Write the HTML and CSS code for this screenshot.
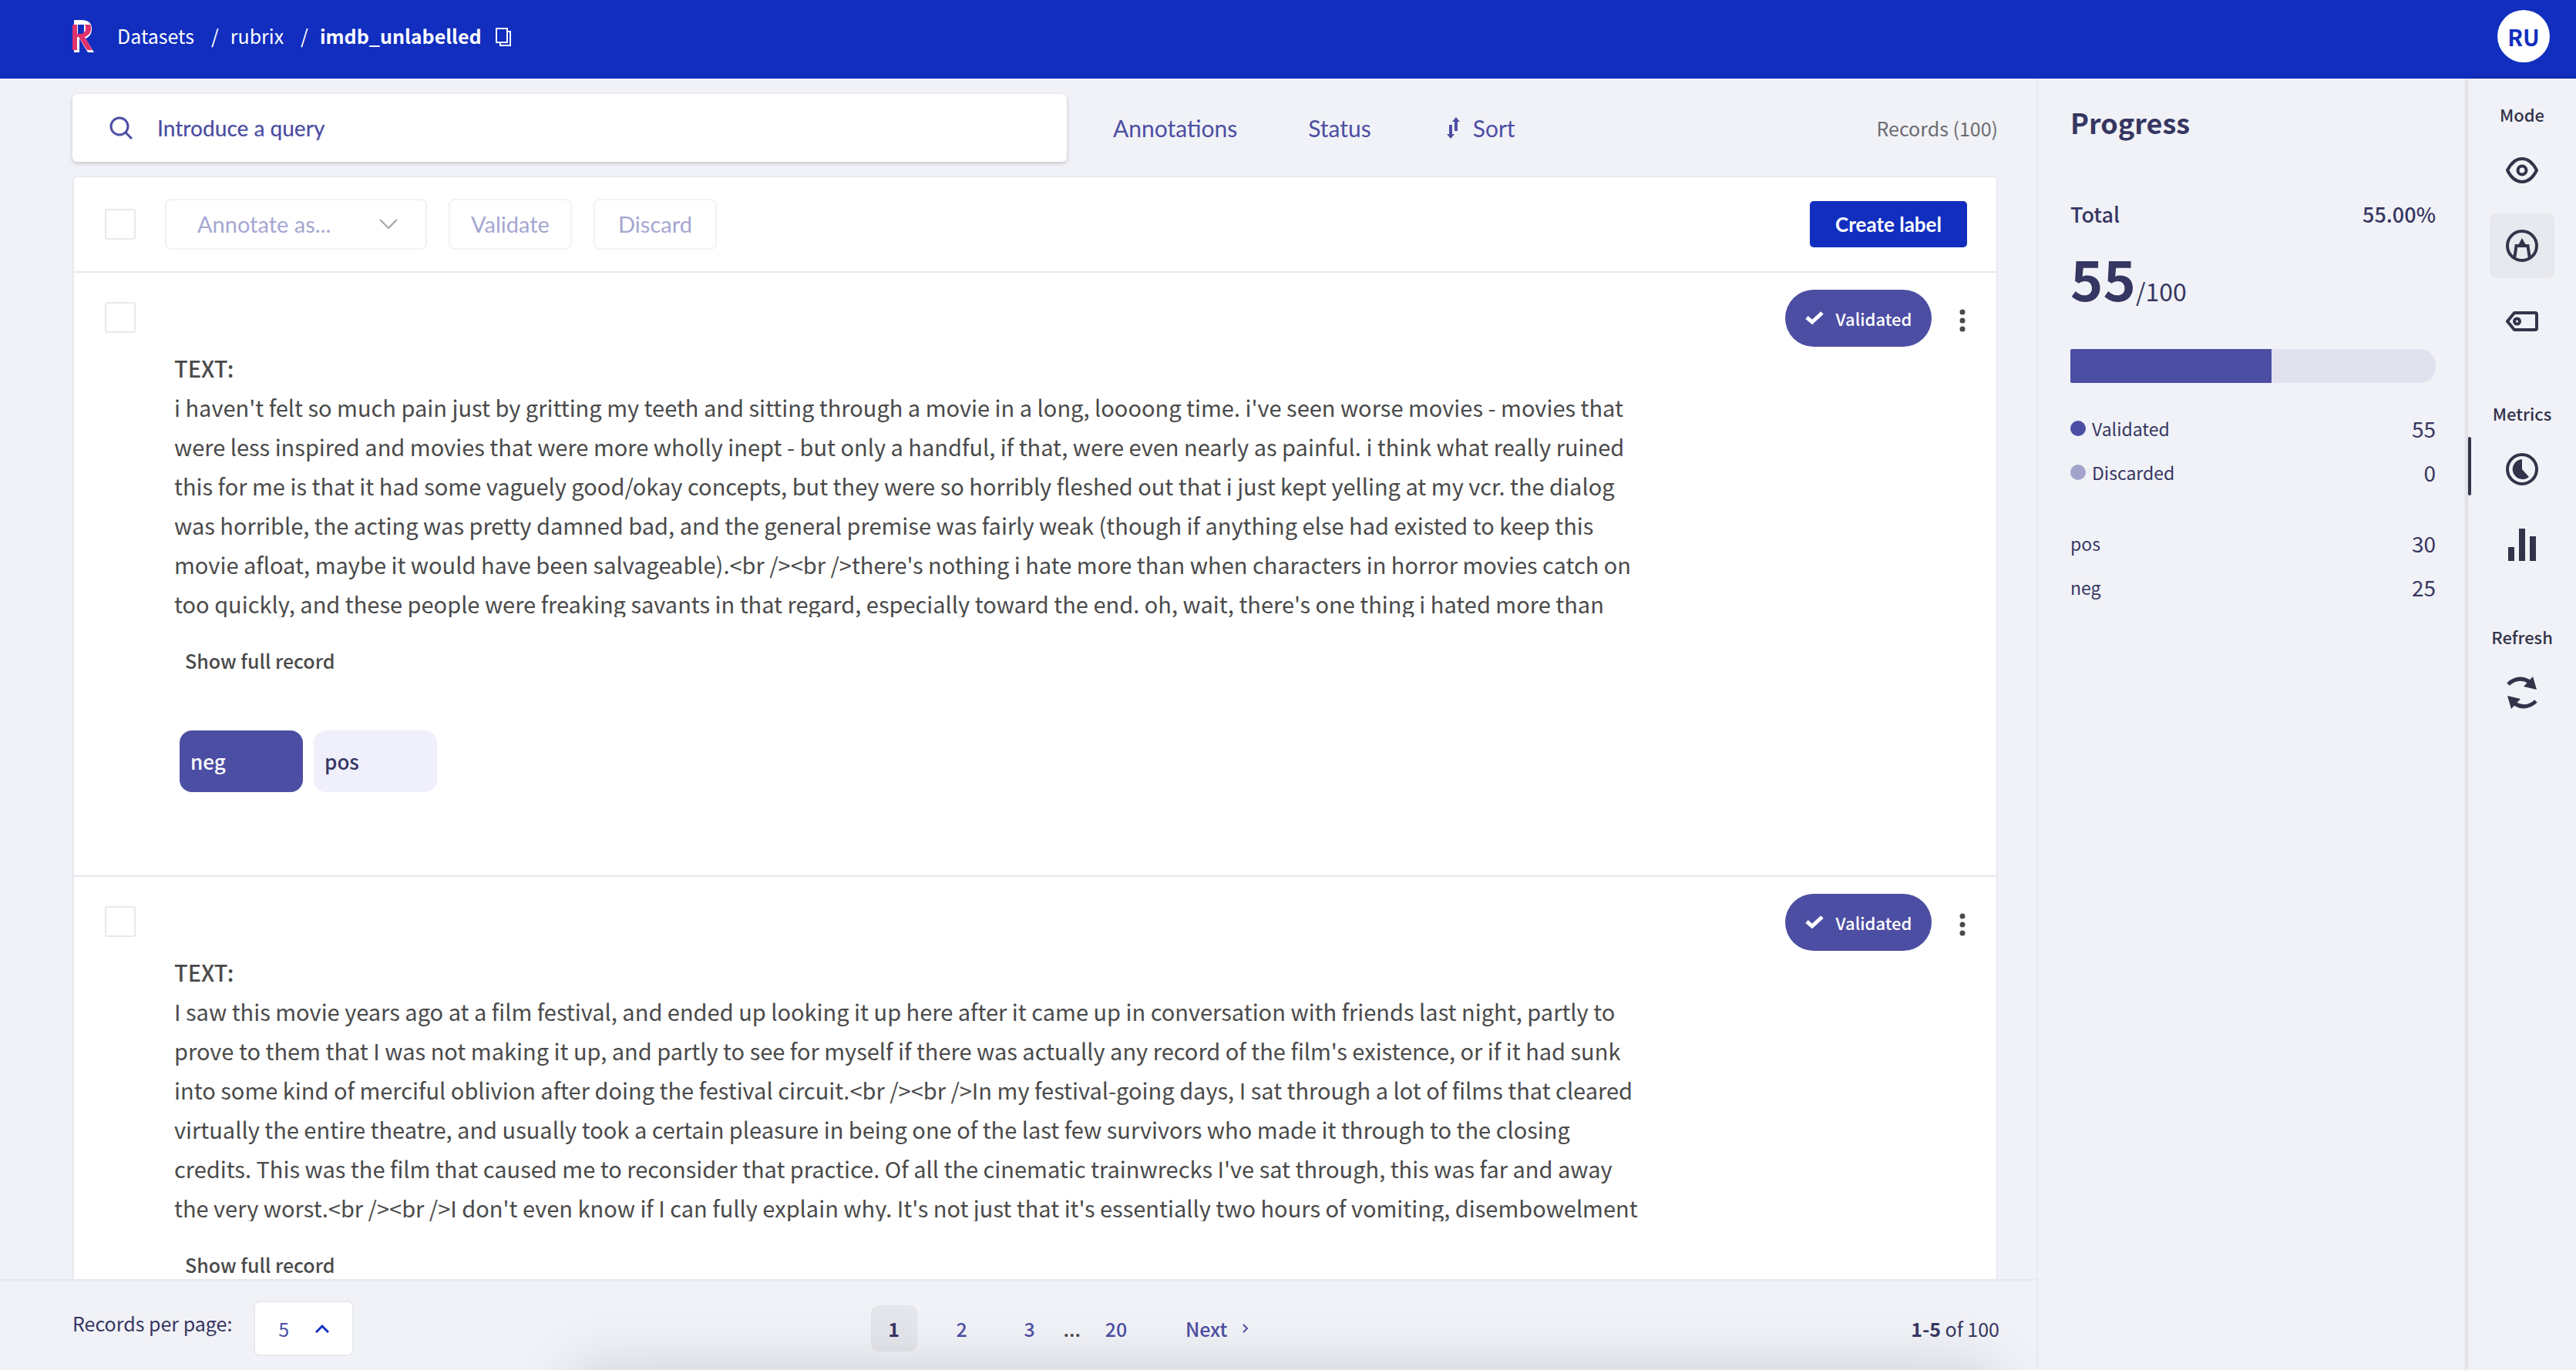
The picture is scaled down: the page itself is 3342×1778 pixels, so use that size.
FILE: index.html
```html
<!DOCTYPE html>
<html lang="en">
<head>
<meta charset="utf-8">
<title>imdb_unlabelled</title>
<link rel="stylesheet" href="styles.css">
</head>
<body>
<div class="app">
  <header class="topbar">
    <a class="logo" href="#" aria-label="Home">
      <svg width="30" height="42" viewBox="0 0 30 42"><path fill="#fff" d="M2 0h10c10 0 13 5 13 11 0 7-3 11-8 13l11 18h-8L9 24v18H2z"/><path fill="#112ebf" d="M7 6h8v12H7z"/><path fill="#e0336e" d="M0 6h6v12h3c6 0 8-3 8-7 0-2 0-4-1-5h7c1 2 1 3 1 5 0 6-3 9-8 11l10 17h-7L8 22H6v17H0z"/></svg>
    </a>
    <nav class="crumbs">
      <a href="#">Datasets</a><span class="sep">/</span><a href="#">rubrix</a><span class="sep">/</span><a class="current" href="#">imdb_unlabelled</a>
      <button class="copy" aria-label="Copy name"><svg width="20" height="24" viewBox="0 0 20 24" fill="none" stroke="#fff" stroke-width="2"><path d="M1 1h14v18H1zM15 5h4v18H6v-4"/></svg></button>
    </nav>
    <button class="avatar">RU</button>
  </header>
  <div class="body">
    <main class="main">
      <div class="filters">
        <label class="search">
          <svg width="30" height="30" viewBox="0 0 30 30" fill="none" stroke="#4c4ea3" stroke-width="3"><circle cx="13" cy="13" r="11"/><path d="M21 21l8 8"/></svg>
          <input type="text" placeholder="Introduce a query" aria-label="Query">
        </label>
        <button class="filter">Annotations</button>
        <button class="filter">Status</button>
        <button class="filter sort"><svg width="18" height="28" viewBox="0 0 18 28" fill="#4c4ea3"><path d="M3 10h4v12h3l-5 6-5-6h3zM10 18V6H7l5-6 5 6h-3v12z"/></svg>Sort</button>
        <span class="count">Records (100)</span>
      </div>
      <section class="list">
        <div class="bulk">
          <input class="check" type="checkbox" aria-label="Select all">
          <button class="ghost annotate">Annotate as...<svg width="24" height="14" viewBox="0 0 24 14" fill="none" stroke="#a6a6a6" stroke-width="2"><path d="M1 1l11 11L23 1"/></svg></button>
          <button class="ghost">Validate</button>
          <button class="ghost">Discard</button>
          <button class="create">Create label</button>
        </div>
        <article class="record">
          <input class="check" type="checkbox" aria-label="Select record 1">
          <div class="content">
            <h2>TEXT:</h2>
            <p class="text">i haven't felt so much pain just by gritting my teeth and sitting through a movie in a long, loooong time. i've seen worse movies - movies that<br>were less inspired and movies that were more wholly inept - but only a handful, if that, were even nearly as painful. i think what really ruined<br>this for me is that it had some vaguely good/okay concepts, but they were so horribly fleshed out that i just kept yelling at my vcr. the dialog<br>was horrible, the acting was pretty damned bad, and the general premise was fairly weak (though if anything else had existed to keep this<br>movie afloat, maybe it would have been salvageable).&lt;br /&gt;&lt;br /&gt;there's nothing i hate more than when characters in horror movies catch on<br>too quickly, and these people were freaking savants in that regard, especially toward the end. oh, wait, there's one thing i hated more than</p>
            <button class="more">Show full record</button>
            <div class="labels"><button class="label on">neg</button><button class="label">pos</button></div>
          </div>
          <div class="status">
            <span class="pill"><svg width="24" height="18" viewBox="0 0 24 18" fill="none" stroke="#fff" stroke-width="5"><path d="M2 8l7 6L22 2"/></svg>Validated</span>
            <button class="dots" aria-label="More"><svg width="8" height="30" viewBox="0 0 8 30" fill="#4a4a4a"><circle cx="4" cy="4" r="3.5"/><circle cx="4" cy="15" r="3.5"/><circle cx="4" cy="26" r="3.5"/></svg></button>
          </div>
        </article>
        <article class="record">
          <input class="check" type="checkbox" aria-label="Select record 2">
          <div class="content">
            <h2>TEXT:</h2>
            <p class="text">I saw this movie years ago at a film festival, and ended up looking it up here after it came up in conversation with friends last night, partly to<br>prove to them that I was not making it up, and partly to see for myself if there was actually any record of the film's existence, or if it had sunk<br>into some kind of merciful oblivion after doing the festival circuit.&lt;br /&gt;&lt;br /&gt;In my festival-going days, I sat through a lot of films that cleared<br>virtually the entire theatre, and usually took a certain pleasure in being one of the last few survivors who made it through to the closing<br>credits. This was the film that caused me to reconsider that practice. Of all the cinematic trainwrecks I've sat through, this was far and away<br>the very worst.&lt;br /&gt;&lt;br /&gt;I don't even know if I can fully explain why. It's not just that it's essentially two hours of vomiting, disembowelment</p>
            <button class="more">Show full record</button>
          </div>
          <div class="status">
            <span class="pill"><svg width="24" height="18" viewBox="0 0 24 18" fill="none" stroke="#fff" stroke-width="5"><path d="M2 8l7 6L22 2"/></svg>Validated</span>
            <button class="dots" aria-label="More"><svg width="8" height="30" viewBox="0 0 8 30" fill="#4a4a4a"><circle cx="4" cy="4" r="3.5"/><circle cx="4" cy="15" r="3.5"/><circle cx="4" cy="26" r="3.5"/></svg></button>
          </div>
        </article>
      </section>
      <footer class="pager">
        <div class="per"><span class="per-label">Records per page:</span>
          <button class="size" aria-label="Records per page">5<svg width="18" height="12" viewBox="0 0 18 12" fill="none" stroke="#112ebf" stroke-width="3"><path d="M1 11l8-8 8 8"/></svg></button></div>
        <nav class="pages">
          <a class="page on" href="#">1</a><a class="page" href="#">2</a><a class="page" href="#">3</a><span class="gap">...</span><a class="page last" href="#">20</a>
          <a class="next" href="#">Next<svg width="8" height="12" viewBox="0 0 8 12" fill="none" stroke="#4c4ea3" stroke-width="2"><path d="M1 1l5 5-5 5"/></svg></a>
        </nav>
        <span class="range"><b>1-5</b> of 100</span>
      </footer>
    </main>
    <aside class="progress">
      <h1>Progress</h1>
      <div class="total"><span>Total</span><span>55.00%</span></div>
      <div class="score"><b>55</b>/100</div>
      <div class="bar"><div class="fill" style="width:55%"></div></div>
      <div class="stats">
        <div class="stat"><span><i class="dot"></i>Validated</span><b>55</b></div>
        <div class="stat"><span><i class="dot pale"></i>Discarded</span><b>0</b></div>
      </div>
      <div class="stats">
        <div class="stat"><span>pos</span><b>30</b></div>
        <div class="stat"><span>neg</span><b>25</b></div>
      </div>
    </aside>
    <nav class="rail">
      <h3>Mode</h3>
      <button class="tool" aria-label="Explore"><svg width="42" height="34" viewBox="0 0 42 34" fill="none" stroke="#33334a" stroke-width="4" stroke-linejoin="round"><path d="M2 17C12-3 30-3 40 17C30 37 12 37 2 17z"/><circle cx="21" cy="17" r="5.5"/></svg></button>
      <button class="tool on" aria-label="Annotate"><svg width="42" height="42" viewBox="0 0 42 42" fill="none" stroke="#33334a"><circle cx="21" cy="21" r="19" stroke-width="4"/><path stroke-width="4" d="M11 38l2.500-17h15l2.500 17"/><path d="M21 11l5 9H16z" fill="#33334a" stroke="none"/></svg></button>
      <button class="tool" aria-label="Define rules"><svg width="42" height="26" viewBox="0 0 42 26" fill="none" stroke="#33334a" stroke-width="4" stroke-linejoin="round"><path d="M11 2h27q2 0 2 2v18q0 2-2 2H11L2 13z"/><circle cx="14.500" cy="13" r="3.500"/></svg></button>
      <h3>Metrics</h3>
      <button class="tool active" aria-label="Progress"><svg width="42" height="42" viewBox="0 0 42 42" fill="none" stroke="#33334a" stroke-width="4"><circle cx="21" cy="21" r="19"/><path d="M21 8v13l9 10A13 13 0 1 1 21 8z" fill="#33334a" stroke="none"/></svg></button>
      <button class="tool" aria-label="Stats"><svg width="36" height="42" viewBox="0 0 36 42" fill="#33334a"><path d="M0 24h8v18H0zM14 0h8v42h-8zM28 10h8v32h-8z"/></svg></button>
      <h3>Refresh</h3>
      <button class="tool" aria-label="Refresh"><svg width="40" height="42" viewBox="0 0 40 42" fill="none" stroke="#33334a" stroke-width="5"><path d="M2 10Q15-2 30 7M38 32Q25 44 10 35"/><path d="M34 0l5 17-17-4zM1 25l17 4L6 42z" fill="#33334a" stroke="none"/></svg></button>
    </nav>
  </div>
</div>
</body>
</html>
```
FILE: styles.css
```css
* { box-sizing: border-box; }
body { margin: 0; background: #f1f2f7; color: #363662; font: 27px/40px "Noto Sans CJK SC", "Noto Sans", sans-serif; }
button, input { font: inherit; color: inherit; border: 0; background: none; padding: 0; margin: 0; }
a { color: inherit; text-decoration: none; }
svg { display: block; flex: none; }
h1, h2, h3, p { margin: 0; }
.app { height: 100vh; display: flex; flex-direction: column; overflow: hidden; }
.topbar { flex: none; height: 102px; padding: 0 34px 8px 94px; display: flex; align-items: center; background: #112ebf; color: #fff; }
.crumbs { display: flex; align-items: center; margin-left: 28px; padding-bottom: 2px; font-size: 25px; }
.sep { margin: 0 15px 0 22px; }
.current { font-weight: 700; }
.copy { margin: 4px 0 0 18px; }
.avatar { margin-left: auto; width: 68px; height: 68px; border-radius: 50%; background: #fff; color: #112ebf; font-weight: 700; font-size: 29px; }
.body { flex: 1; min-height: 0; display: flex; }
.main { position: relative; flex: 1; min-width: 0; display: flex; flex-direction: column; }
.main::after { content: ""; position: absolute; top: 100%; left: 28%; right: 2%; height: 200px; border-radius: 20px; box-shadow: 0 0 80px #00000026; pointer-events: none; }
.filters { flex: none; height: 126px; padding: 20px 50px 18px 94px; display: flex; align-items: center; font-family: Lato, sans-serif; color: #4c4ea3; }
.search { width: 1290px; height: 88px; padding-left: 48px; display: flex; align-items: center; gap: 32px; border-radius: 6px; background: #fff; box-shadow: 0 2px 5px #0003; font-size: 28px; }
.search input { flex: 1; outline: 0; }
.search input::placeholder { color: #4c4ea3; opacity: 1; font-weight: 500; }
.filter { margin-left: 60px; font-size: 30px; }
.filter + .filter { margin-left: 92px; }
.filter + .sort { display: flex; align-items: center; gap: 16px; margin-left: 98px; }
.count { margin-left: auto; font-size: 25px; font-family: "Noto Sans CJK SC", sans-serif; color: #6b6b72; }
.list { flex: 1; min-height: 0; overflow: hidden; margin: 0 50px 0 94px; border: 2px solid #e8e9ee; border-bottom: 0; border-radius: 6px 6px 0 0; background: #fff; }
.check { appearance: none; flex: none; width: 40px; height: 40px; border: 2px solid #e8e9ee; border-radius: 3px; background: #fff; }
.bulk { height: 122px; padding: 0 38px 0 40px; display: flex; align-items: center; font-family: Lato, sans-serif; }
.ghost { width: 160px; height: 66px; margin-left: 28px; border: 2px solid #f3f3f6; border-radius: 8px; color: #a5a6d1; font-size: 29px; }
.annotate { width: 340px; margin-left: 38px; padding: 0 36px 0 40px; display: flex; align-items: center; justify-content: space-between; }
.create { margin-left: auto; width: 204px; height: 60px; border-radius: 5px; background: #112ebf; color: #fff; font-weight: 700; font-size: 26px; }
.record { height: 784px; border-top: 2px solid #e8e9ee; padding: 22px 40px 0; display: flex; align-items: flex-start; color: #4a4a4a; }
.record .check { margin-top: 16px; }
.content { flex: 1; margin: 76px 0 0 50px; }
h2 { font-size: 29px; line-height: 51px; font-weight: 500; }
.text { height: 298px; overflow: hidden; white-space: nowrap; font-size: 29px; line-height: 51px; }
.more { display: block; margin: 38px 0 0 14px; font-weight: 500; font-size: 25px; line-height: 36px; }
.labels { display: flex; gap: 14px; margin: 73px 0 0 7px; }
.label { width: 160px; height: 80px; padding-left: 14px; border-radius: 16px; text-align: left; font-weight: 500; font-size: 26px; color: #363662; background: #f0effc; }
.label.on { background: #4c4ea3; color: #fff; }
.status { display: flex; align-items: center; gap: 36px; }
.dots { margin-top: 6px; }
.pill { width: 190px; height: 74px; display: flex; align-items: center; justify-content: center; gap: 16px; border-radius: 37px; background: #4c4ea3; color: #fff; font-weight: 500; font-size: 22px; }
.pager { flex: none; height: 118px; padding: 8px 48px 0 94px; display: grid; grid-template-columns: 1fr auto 1fr; align-items: center; border-top: 2px solid #e8e9ee; font-size: 25px; }
.per { display: flex; align-items: center; gap: 28px; }
.per-label { padding-bottom: 14px; }
.size { width: 130px; height: 72px; padding: 0 30px; display: flex; align-items: center; justify-content: space-between; border: 2px solid #e8e9ee; border-radius: 8px; background: #fff; color: #4c4ea3; }
.pages { display: flex; align-items: center; margin-left: 62px; color: #4c4ea3; font-weight: 500; }
.page { width: 60px; line-height: 60px; margin-right: 28px; border-radius: 10px; text-align: center; }
.page.on { background: #e5e6eb; color: #363662; font-weight: 700; }
.gap { margin-left: -14px; color: #4a4a4a; }
.page.last { margin: 0 60px 0 16px; }
.next { display: flex; align-items: center; gap: 20px; }
.range { text-align: right; }
.progress { flex: none; width: 560px; border-left: 2px solid #e8e9ee; padding: 26px 42px 0; }
h1 { font-size: 36px; line-height: 60px; font-weight: 700; }
.total { display: flex; justify-content: space-between; margin-top: 70px; font-weight: 500; }
.score { display: flex; align-items: baseline; margin-top: 22px; font-size: 32px; line-height: 40px; }
.score b { font-size: 72px; line-height: 80px; }
.bar { height: 44px; margin-top: 53px; border-radius: 2px 20px 20px 2px; overflow: hidden; background: #e2e2ee; }
.fill { height: 100%; background: #4c4ea3; }
.stats { margin-top: 30px; }
.stats + .stats { margin-top: 35px; }
.stat { display: flex; justify-content: space-between; height: 57px; align-items: center; font-size: 23px; }
.stat b { font-weight: 400; font-size: 28px; }
.dot { display: inline-block; width: 20px; height: 20px; margin-right: 8px; border-radius: 50%; background: #4c4ea3; }
.dot.pale { background: #a3a4cb; }
.rail { flex: none; width: 140px; display: flex; flex-direction: column; align-items: center; color: #33334a; box-shadow: 0 0 8px #0003; }
h3 { font-size: 22px; line-height: 40px; font-weight: 500; margin: 43px 0 11px; }
h3:first-child { margin-top: 26px; }
.tool { position: relative; width: 84px; height: 84px; margin-bottom: 14px; display: flex; align-items: center; justify-content: center; border-radius: 8px; }
.tool.on { background: #e8e9ee; }
.tool.active::before { content: ""; position: absolute; left: -28px; top: 0; width: 4px; height: 76px; border-radius: 2px; background: #33334a; }
```
